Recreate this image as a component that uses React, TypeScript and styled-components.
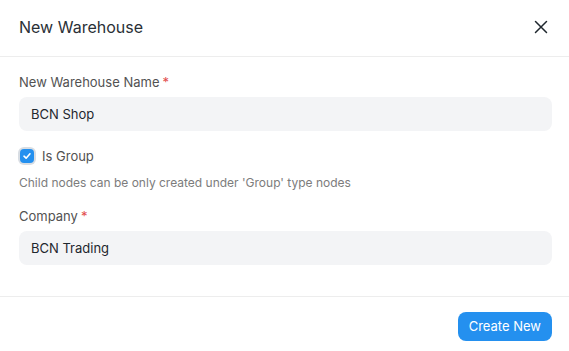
import React from 'react';
import styled, { createGlobalStyle } from 'styled-components';

const GlobalStyle = createGlobalStyle`
  html, body {
    margin: 0;
    padding: 0;
    background: #ffffff;
  }
  body {
    font-family: Inter, "Noto Sans", sans-serif;
    color: #1f272e;
    -webkit-font-smoothing: antialiased;
  }
`;

const Dialog = styled.div`
  width: 569px;
  height: 351px;
  display: flex;
  flex-direction: column;
  background: #ffffff;
`;

const Header = styled.div`
  height: 57px;
  box-sizing: border-box;
  border-bottom: 1px solid #ededed;
  display: flex;
  align-items: center;
  justify-content: space-between;
  padding: 0 19px 2px 19px;
`;

const Title = styled.h3`
  margin: 0;
  font-size: 16px;
  font-weight: 400;
  color: #2a3036;
`;

const CloseButton = styled.button`
  border: none;
  background: transparent;
  padding: 0;
  width: 24px;
  height: 24px;
  display: flex;
  align-items: center;
  justify-content: center;
  margin-right: -3px;
  color: #1f272e;
  cursor: pointer;
`;

const Body = styled.div`
  padding: 15px 17px 0 19px;
  height: 240px;
  box-sizing: border-box;
  border-bottom: 1px solid #ededed;
`;

const Field = styled.div<{ $gap?: number }>`
  margin-bottom: ${(p) => p.$gap ?? 0}px;
`;

const Label = styled.div`
  font-size: 13px;
  line-height: 20px;
  color: #525252;
  margin-bottom: 5px;
`;

const Required = styled.span`
  color: #e24c4c;
  margin-left: 3px;
`;

const Input = styled.div`
  height: 34px;
  box-sizing: border-box;
  border-radius: 8px;
  background: #f3f4f6;
  padding: 0 12px;
  display: flex;
  align-items: center;
  font-size: 13px;
  color: #1f272e;
`;

const CheckRow = styled.label`
  display: flex;
  align-items: center;
  gap: 8px;
  font-size: 13px;
  color: #525252;
  height: 20px;
`;

const CheckBox = styled.span`
  width: 14px;
  height: 14px;
  border-radius: 4px;
  background: #2490ef;
  box-shadow: 0 0 0 2px #d8dde3;
  display: flex;
  align-items: center;
  justify-content: center;
  margin-left: 1px;
`;

const Description = styled.p`
  margin: 8px 0 0;
  font-size: 12px;
  line-height: 18px;
  color: #7c7c7c;
`;

const Footer = styled.div`
  flex: 1;
  display: flex;
  align-items: center;
  justify-content: flex-end;
  padding: 4px 17px 0 19px;
`;

const PrimaryButton = styled.button`
  height: 29px;
  padding: 0 11px;
  border: none;
  border-radius: 8px;
  background: #2490ef;
  color: #ffffff;
  font-family: Inter, "Noto Sans", sans-serif;
  font-size: 13px;
  cursor: pointer;
`;

export default function App() {
  return (
    <>
      <GlobalStyle />
      <Dialog>
        <Header>
          <Title>New Warehouse</Title>
          <CloseButton aria-label="Close">
            <svg width="14" height="14" viewBox="0 0 14 14" fill="none">
              <path d="M1.5 1.5 L12.5 12.5 M12.5 1.5 L1.5 12.5" stroke="#1f272e" strokeWidth="1.5" strokeLinecap="round" />
            </svg>
          </CloseButton>
        </Header>
        <Body>
          <Field $gap={15}>
            <Label>
              New Warehouse Name<Required>*</Required>
            </Label>
            <Input>BCN Shop</Input>
          </Field>
          <Field $gap={14}>
            <CheckRow>
              <CheckBox>
                <svg width="10" height="10" viewBox="0 0 10 10" fill="none">
                  <path d="M2 5.2 L4.1 7.2 L8 2.8" stroke="#ffffff" strokeWidth="1.6" strokeLinecap="round" strokeLinejoin="round" />
                </svg>
              </CheckBox>
              Is Group
            </CheckRow>
            <Description>Child nodes can be only created under 'Group' type nodes</Description>
          </Field>
          <Field>
            <Label>
              Company<Required>*</Required>
            </Label>
            <Input>BCN Trading</Input>
          </Field>
        </Body>
        <Footer>
          <PrimaryButton>Create New</PrimaryButton>
        </Footer>
      </Dialog>
    </>
  );
}
